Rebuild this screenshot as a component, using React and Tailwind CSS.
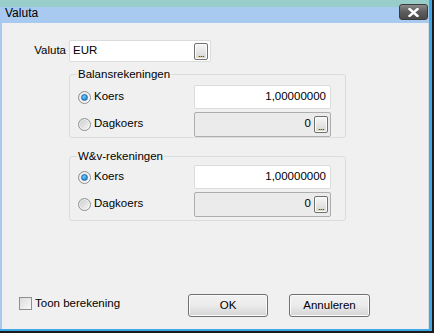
const FONT = "font-['Liberation_Sans',Arial,sans-serif]";

function DotsButton() {
  return (
    <div className="w-[14px] h-[17px] rounded-[2px] border border-[#707070] bg-gradient-to-b from-[#f6f6f6] to-[#d6d6d6] flex items-end justify-center pb-[1px] shadow-[inset_0_0_0_1px_#fcfcfc]">
      <span className="text-[9px] leading-[8px] tracking-[-0.5px] text-black">...</span>
    </div>
  );
}

function Radio({ checked }) {
  return (
    <div className="w-[13px] h-[13px] rounded-full border border-[#8e8f8f] bg-gradient-to-br from-[#e6e6e6] to-[#fafafa] flex items-center justify-center">
      {checked ? (
        <div className="w-[7px] h-[7px] rounded-full bg-[radial-gradient(circle_at_40%_35%,#7fd0ff,#1f86d6_70%,#1a5f9e)] border border-[#2a6ea8]" />
      ) : (
        <div className="w-[9px] h-[9px] rounded-full bg-gradient-to-br from-[#cfcfcf] to-[#f4f4f4]" />
      )}
    </div>
  );
}

function RateRow({ label, checked, value, disabled }) {
  return (
    <div className="flex items-center h-[24px]">
      <div className="flex items-center w-[115px] pl-[8px] gap-[3px]">
        <Radio checked={checked} />
        <span className="text-[11.5px] text-black">{label}</span>
      </div>
      {disabled ? (
        <div className="ml-auto w-[137px] h-[25px] rounded-[2px] border border-[#adadad] bg-[#ebebeb] flex items-center justify-end pr-[2px] gap-[3px]">
          <span className="text-[11.5px] text-black">{value}</span>
          <DotsButton />
        </div>
      ) : (
        <div className="ml-auto w-[137px] h-[24px] rounded-[2px] border border-[#dcdcdc] bg-white flex items-center justify-end pr-[4px]">
          <span className="text-[11.5px] text-black">{value}</span>
        </div>
      )}
    </div>
  );
}

function Group({ title, className }) {
  return (
    <div className={`relative ml-[67px] w-[277px] rounded-[3px] border border-[#d9dde0] pr-[14px] ${className}`}>
      <span className="absolute left-[7px] top-[-8px] px-[1px] bg-[#f0f0f0] text-[11.5px] leading-[14px] text-black">{title}</span>
      <div className="flex flex-col gap-[3px]">
        <RateRow label="Koers" checked value="1,00000000" />
        <RateRow label="Dagkoers" value="0" disabled />
      </div>
    </div>
  );
}

function Button({ children, className }) {
  return (
    <div className={`h-[23px] rounded-[3px] border border-[#707070] bg-gradient-to-b from-[#f2f2f2] via-[#ebebeb] to-[#d4d4d4] shadow-[inset_0_0_0_1px_#fbfbfb] flex items-center justify-center text-[11.5px] text-black ${className}`}>
      {children}
    </div>
  );
}

export default function App() {
  return (
    <div className={`w-[434px] h-[333px] flex flex-col bg-[#1b1b1b] pr-[2px] pb-[2px] ${FONT}`}>
      <div className="flex-1 flex flex-col bg-[#3ea7e6] pr-[3px] pb-[2px]">
        {/* Title bar */}
        <div className="h-[23px] flex items-start justify-between pl-[5px] bg-[linear-gradient(to_bottom,#99cdca_7px,#a9caf0_7px)]">
          <span className="text-[12px] leading-[12px] mt-[7px] text-black">Valuta</span>
          <div className="mt-[4px] mr-[1px] w-[29px] h-[16px] rounded-[3px] border border-[#3b3b3b] bg-gradient-to-b from-[#8a8a8a] via-[#5c5c5c] to-[#4a4a4a] flex items-center justify-center">
            <svg width="11" height="9" viewBox="0 0 11 9">
              <path d="M1.5 1 L9.5 8 M9.5 1 L1.5 8" stroke="white" strokeWidth="2.4" strokeLinecap="square" />
            </svg>
          </div>
        </div>

        {/* Body */}
        <div className="flex-1 flex bg-[#a9caf0] pl-[2px]">
          <div className="flex-1 flex flex-col bg-[#f0f0f0] border-r border-[#dcdcdc]">
            <div className="flex items-center mt-[17px]">
              <span className="w-[64px] text-right text-[11.5px] text-black">Valuta</span>
              <div className="ml-[3px] w-[142px] h-[22px] rounded-[2px] border border-[#dcdcdc] bg-white flex items-center pl-[3px] pr-[2px]">
                <span className="text-[11.5px] text-black">EUR</span>
                <div className="ml-auto">
                  <DotsButton />
                </div>
              </div>
            </div>

            <Group title="Balansrekeningen" className="mt-[12px] pt-[10px] pb-[1px]" />
            <Group title="W&v-rekeningen" className="mt-[18px] pt-[8px] pb-[4px]" />

            <div className="flex-1" />

            <div className="flex items-start mb-[12px]">
              <div className="w-[186px] flex items-center pl-[17px] gap-[3px] mt-[1px]">
                <div className="w-[13px] h-[13px] border border-[#8e8f8f] bg-gradient-to-br from-[#dcdcdc] to-[#f8f8f8]" />
                <span className="text-[11.5px] text-black">Toon berekening</span>
              </div>
              <Button className="w-[80px]">OK</Button>
              <Button className="w-[81px] ml-[21px]">Annuleren</Button>
            </div>
          </div>
        </div>
      </div>
    </div>
  );
}
